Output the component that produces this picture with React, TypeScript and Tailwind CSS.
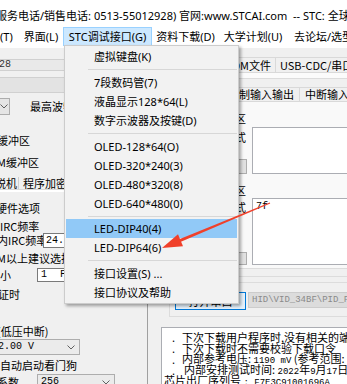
import React from "react";

const UI = "font-['Noto_Sans','Noto_Sans_CJK_SC',sans-serif]";
const CJK = "font-['Noto_Sans_CJK_SC',sans-serif]";
const MONO = "font-['Liberation_Mono','Noto_Sans_CJK_SC',monospace]";

function Chevron() {
  return (
    <svg width="8" height="5" viewBox="0 0 8 5" className="shrink-0">
      <path d="M0.5 0.5 L4 4 L7.5 0.5" fill="none" stroke="#606060" strokeWidth="1" />
    </svg>
  );
}

type MenuEntry = { t?: string; sep?: number; hl?: boolean };

const menuItems: MenuEntry[] = [
  { t: "虚拟键盘(K)" },
  { sep: 7 },
  { t: "7段数码管(7)" },
  { t: "液晶显示128*64(L)" },
  { t: "数字示波器及按键(D)" },
  { sep: 7 },
  { t: "OLED-128*64(O)" },
  { t: "OLED-320*240(3)" },
  { t: "OLED-480*320(8)" },
  { t: "OLED-640*480(0)" },
  { sep: 6 },
  { t: "LED-DIP40(4)", hl: true },
  { t: "LED-DIP64(6)" },
  { sep: 7 },
  { t: "接口设置(S) ..." },
  { t: "接口协议及帮助" },
];

function Header() {
  return (
    <div className={`h-[25px] pt-[5px] bg-white flex items-center whitespace-pre leading-none text-[11px] ${UI}`}>
      <span className="ml-[-4px]">服务电话/销售电话: 0513-55012928) 官网:www.STCAI.com  -- STC: 全球最大的8051单片机设计公司</span>
    </div>
  );
}

function MenuBar() {
  return (
    <div className={`h-[23px] bg-white flex items-center whitespace-nowrap leading-none text-[11px] ${UI}`}>
      <div className="w-[19px] shrink-0">(T)</div>
      <div className="w-[44px] shrink-0 text-center">界面(L)</div>
      <div className="w-[89px] h-[19px] shrink-0 bg-[#cce8ff] border border-[#99d1ff] flex items-center justify-center">STC调试接口(G)</div>
      <div className="w-[67px] shrink-0 text-center">资料下载(D)</div>
      <div className="w-[68px] shrink-0 text-center">大学计划(U)</div>
      <div className="pl-[7px] shrink-0">去论坛/选型</div>
    </div>
  );
}

function LeftPanel() {
  const row = "flex items-center leading-none whitespace-nowrap shrink-0";
  return (
    <div className={`w-[148px] shrink-0 border-r border-[#a0a0a0] flex flex-col text-[11px] ${CJK}`}>
      <div className={`mt-[11px] h-[12px] bg-[#e9e9e9] border-y border-r border-[#d0d0d0] ${row} ${MONO} text-[10px] text-[#333]`}>
        <span className="ml-[-1px]">28</span>
      </div>
      <div className="mt-[6px] h-[16px] shrink-0 bg-[#e3e3e3] border-y border-r border-[#d0d0d0]" />
      <div className={`mt-[5px] h-[17px] ${row}`}>
        <div className="ml-[-31px] w-[41px] h-[17px] shrink-0 bg-[#e5e5e5] border border-[#adadad] flex items-center justify-end pr-[1px]">
          <Chevron />
        </div>
        <span className="ml-[20px]">最高波特率</span>
      </div>
      <div className={`mt-[18px] h-[14px] ${row}`}>
        <span className="ml-[-3px]">缓冲区</span>
      </div>
      <div className={`mt-[8px] h-[14px] ${row}`}>
        <span className="ml-[-3px]">M缓冲区</span>
      </div>
      <div className={`mt-[8px] h-[12px] flex items-stretch leading-none whitespace-nowrap shrink-0`}>
        <div className="w-[19px] shrink-0 border-r border-[#cfcfcf] overflow-hidden flex items-center justify-end pr-[1px]">
          <span>脱机</span>
        </div>
        <div className="pl-[4px] pr-[4px] shrink-0 border-r border-[#cfcfcf] flex items-center">程序加密后传输</div>
        <div className="pl-[4px] shrink-0 flex items-center">ID号</div>
      </div>
      <div className="h-[3px] shrink-0 bg-white border-t border-[#d9d9d9]" />
      <div className={`mt-[9px] h-[14px] ${row}`}>
        <span className="ml-[-4px]">硬件选项</span>
      </div>
      <div className={`mt-[4px] h-[14px] ${row}`}>
        <span className="ml-[0px]">IRC频率</span>
      </div>
      <div className={`h-[15px] ${row}`}>
        <div className="w-[43px] shrink-0 overflow-visible">
          <span className="ml-[-3px]">内IRC频率</span>
        </div>
        <div className={`w-[110px] h-[15px] shrink-0 bg-white border border-[#7a7a7a] flex items-center pl-[2px] ${MONO} text-[10px]`}>24.000</div>
      </div>
      <div className={`mt-[3px] h-[14px] ${row}`}>
        <span className="ml-[-3px]">M以上建议选择</span>
      </div>
      <div className={`mt-[3px] h-[14px] ${row}`}>
        <div className="w-[37px] shrink-0">小</div>
        <div className={`w-[110px] h-[14px] shrink-0 bg-white border border-[#7a7a7a] flex items-center pl-[3px] ${MONO} text-[10px]`}>
          <span>1</span>
          <span className="ml-[13px]">F</span>
        </div>
      </div>
      <div className={`mt-[5px] h-[14px] ${row}`}>
        <span className="ml-[-2px]">证时</span>
      </div>
      <div className={`mt-[23px] h-[14px] ${row}`}>
        <span className="ml-[-3px]">(低压中断)</span>
      </div>
      <div className={`mt-[1px] h-[16px] ${row}`}>
        <div className={`ml-[-5px] w-[85px] h-[16px] shrink-0 bg-[#ebebeb] border border-[#adadad] flex items-center justify-between pl-[2px] pr-[4px] ${MONO} text-[10px]`}>
          <span>2.00 V</span>
          <Chevron />
        </div>
      </div>
      <div className={`mt-[3px] h-[14px] ${row}`}>
        <span>自动启动看门狗</span>
      </div>
      <div className={`mt-[2px] h-[16px] ${row}`}>
        <div className="w-[37px] shrink-0">
          <span className="ml-[-3px]">系数</span>
        </div>
        <div className={`w-[78px] h-[16px] shrink-0 bg-[#ebebeb] border border-[#adadad] flex items-center justify-between pl-[3px] pr-[4px] ${MONO} text-[10px]`}>
          <span>256</span>
          <Chevron />
        </div>
      </div>
    </div>
  );
}

function OutLine({ children, dot = true }: { children: React.ReactNode; dot?: boolean }) {
  return (
    <div className="h-[11px] shrink-0 flex items-center leading-none whitespace-nowrap">
      {dot ? (
        <>
          <span className="ml-[10px] w-[10px] shrink-0">.</span>
          <span>{children}</span>
        </>
      ) : (
        <span className="ml-[2px]">{children}</span>
      )}
    </div>
  );
}

function RightPanel() {
  const lat = `${MONO} text-[9px]`;
  return (
    <div className={`flex-1 min-w-0 flex flex-col text-[11px] ${CJK}`}>
      <div className="mt-[9px] h-[16px] shrink-0 flex pl-[12px] border-b border-[#d9d9d9] leading-none whitespace-nowrap">
        <div className="w-[45px] shrink-0 border-l border-t border-[#d9d9d9] flex items-center justify-center">程序文件</div>
        <div className="w-[71px] shrink-0 border-l border-r border-t border-[#d9d9d9] flex items-center justify-end pr-[4px]">EEPROM文件</div>
        <div className="w-[110px] shrink-0 border-t border-[#d9d9d9] flex items-center pl-[4px]">USB-CDC/串口助手</div>
      </div>
      <div className="h-[5px] shrink-0 bg-[#fbfbfb]" />
      <div className="h-[9px] shrink-0 border-t border-[#dcdcdc]" />
      <div className="h-[15px] shrink-0 flex pl-[60px] border-b border-[#d9d9d9] leading-none whitespace-nowrap">
        <div className="w-[17px] shrink-0 border-l border-t border-[#d9d9d9]" />
        <div className="w-[75px] shrink-0 border-l border-r border-t border-[#d9d9d9] flex items-center justify-end pr-[5px]">控制输入输出</div>
        <div className="w-[80px] shrink-0 border-t border-[#d9d9d9] flex items-center pl-[5px]">中断输入</div>
      </div>
      <div className="h-[167px] shrink-0 bg-[#f9f9f9] border-b border-[#dcdcdc] flex flex-col">
        <div className="mt-[9px] h-[14px] shrink-0 w-[98px] flex items-center justify-end leading-none whitespace-nowrap">接收缓冲区</div>
        <div className="mt-[2px] h-[47px] shrink-0 flex">
          <div className="w-[100px] shrink-0 flex flex-col justify-between items-end">
            <div className="mt-[3px] mr-[2px] h-[14px] flex items-center leading-none whitespace-nowrap">文本模式</div>
            <div className="w-[50px] h-[15px] mr-[1px] bg-[#e1e1e1] border border-[#adadad]" />
          </div>
          <div className="ml-[4px] w-[120px] shrink-0 bg-white border border-[#abadb3]" />
        </div>
        <div className="mt-[9px] h-[14px] shrink-0 w-[98px] flex items-center justify-end leading-none whitespace-nowrap">发送缓冲区</div>
        <div className="mt-[1px] h-[67px] shrink-0 flex">
          <div className="w-[100px] shrink-0 flex flex-col justify-between items-end">
            <div className="mt-[2px] mr-[2px] h-[14px] flex items-center leading-none whitespace-nowrap">文本模式</div>
            <div className="w-[50px] h-[13px] mr-[1px] bg-[#e1e1e1] border border-[#adadad]" />
          </div>
          <div className="ml-[4px] w-[120px] shrink-0 bg-white border border-[#abadb3] p-[3px]">
            <div className={`flex items-center leading-none whitespace-nowrap ${MONO} text-[10px]`}>7f</div>
          </div>
        </div>
      </div>
      <div className="h-[8px] shrink-0 border-b border-[#dcdcdc]" />
      <div className="mt-[5px] ml-[21px] h-[35px] w-[220px] shrink-0 border border-[#dcdcdc] pt-[9px] flex">
        <div className="ml-[5px] w-[71px] h-[18px] shrink-0 bg-[#e5f1fb] border border-[#0078d7] flex items-center justify-center leading-none whitespace-nowrap">
          打开串口
        </div>
        <div className={`ml-[2px] w-[140px] h-[16px] shrink-0 bg-[#dcdcdc] border border-[#cccccc] flex items-center pl-[3px] leading-none whitespace-nowrap text-[#8a8a8a] ${MONO} text-[9px]`}>
          HID\VID_34BF\PID_FF01\7&amp;1
        </div>
      </div>
      <div className="mt-[10px] ml-[13px] h-[80px] w-[200px] shrink-0 bg-white border border-[#abadb3] pt-[4px] flex flex-col">
        <OutLine>下次下载用户程序时,没有相关的端口设置</OutLine>
        <OutLine>下次下载时不需要校验下载口令</OutLine>
        <OutLine>
          内部参考电压: <span className={lat}>1190 mV</span> (参考范围: <span className={lat}>1100~1300mV</span>)
        </OutLine>
        <OutLine>
          <span className="ml-[2px]">内部安排测试时间: </span>
          <span className={lat}>2022</span>年<span className={lat}>9</span>月<span className={lat}>17</span>日
        </OutLine>
        <OutLine dot={false}>
          芯片出厂序列号 <span className={lat}>: F7E3C91001696A</span>
        </OutLine>
      </div>
    </div>
  );
}

function Dropdown() {
  return (
    <div
      className={`absolute left-[64px] top-[45px] w-[175px] border border-[#cccccc] bg-[#f2f2f2] py-[1px] shadow-[2px_2px_3px_rgba(0,0,0,0.35)] text-[11px] text-black ${UI}`}
    >
      {menuItems.map((m, i) =>
        m.sep ? (
          <div key={i} className={`${m.sep === 6 ? "h-[6px]" : "h-[7px]"} flex items-center`}>
            <div className="ml-[23px] mr-[1px] h-px flex-1 bg-[#d7d7d7]" />
          </div>
        ) : (
          <div
            key={i}
            className={`h-[19px] mx-[1px] flex items-center pl-[28px] leading-none whitespace-nowrap ${m.hl ? "bg-[#91c9f7]" : ""}`}
          >
            {m.t}
          </div>
        )
      )}
    </div>
  );
}

function Arrow() {
  return (
    <svg className="absolute left-0 top-0 pointer-events-none" width="347" height="384" viewBox="0 0 347 384">
      <polygon points="270.2,203.5 269.8,202.5 178.0,239.7 179.2,242.5" fill="#f0402a" />
      <polygon points="162,248 178,234.3 183,246.3" fill="#f0402a" />
    </svg>
  );
}

export default function App() {
  return (
    <div className="relative w-[347px] h-[384px] overflow-hidden bg-[#f0f0f0] text-black">
      <Header />
      <MenuBar />
      <div className="flex h-[336px]">
        <LeftPanel />
        <RightPanel />
      </div>
      <Dropdown />
      <Arrow />
    </div>
  );
}
